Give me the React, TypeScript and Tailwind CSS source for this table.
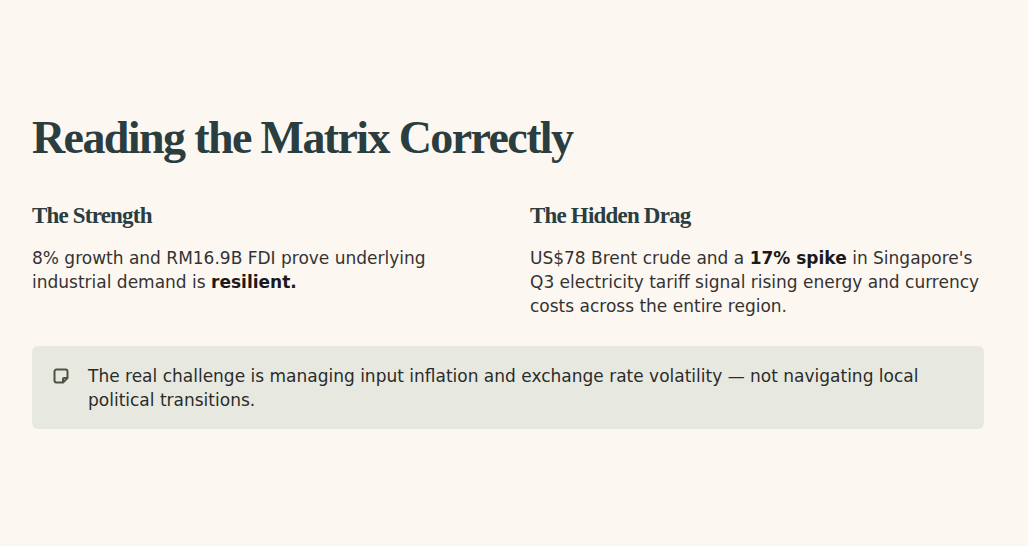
import React from "react";

const serif = { fontFamily: '"Liberation Serif", "DejaVu Serif", serif' };

function NoteIcon() {
  return (
    <svg width="16" height="16" viewBox="0 0 16 16" fill="none" className="shrink-0 mt-[4px]">
      <path
        d="M3.5 1.5h9a2 2 0 0 1 2 2v6.5l-4.5 4.5H3.5a2 2 0 0 1-2-2v-9a2 2 0 0 1 2-2z"
        stroke="#4b5443"
        strokeWidth="2"
        strokeLinejoin="round"
      />
      <path d="M14.5 10h-3.5a1 1 0 0 0-1 1v3.5" stroke="#4b5443" strokeWidth="2" strokeLinejoin="round" />
    </svg>
  );
}

export default function App() {
  return (
    <div
      className="min-h-screen w-full bg-[#fdf7f2] text-[#333333]"
      style={{ fontFamily: '"DejaVu Sans", "Noto Sans", sans-serif' }}
    >
      <div className="w-[952px] ml-[32px] pt-[108px]">
        <h1
          className="text-[46px] leading-[60px] font-bold text-[#2a3d3f] tracking-[-0.035em]"
          style={serif}
        >
          Reading the Matrix Correctly
        </h1>
        <div className="grid grid-cols-2 gap-x-[44px] mt-[33px]">
          <div>
            <h2 className="text-[23px] leading-[30px] font-bold text-[#2a3d3f] tracking-[-0.035em]" style={serif}>
              The Strength
            </h2>
            <p className="mt-[15px] text-[17px] leading-[24px] pr-[20px]">
              8% growth and RM16.9B FDI prove underlying industrial demand is{" "}
              <strong className="font-bold text-[#1a1a1a]">resilient.</strong>
            </p>
          </div>
          <div>
            <h2 className="text-[23px] leading-[30px] font-bold text-[#2a3d3f] tracking-[-0.035em]" style={serif}>
              The Hidden Drag
            </h2>
            <p className="mt-[15px] text-[17px] leading-[24px]">
              US$78 Brent crude and a <strong className="font-bold text-[#1a1a1a]">17% spike</strong> in
              Singapore's Q3 electricity tariff signal rising energy and currency costs across the entire region.
            </p>
          </div>
        </div>
        <div className="mt-[28px] flex gap-[19px] rounded-[6px] bg-[#e7e9e1] pl-[21px] pr-[40px] pt-[18px] pb-[17px]">
          <NoteIcon />
          <p className="text-[17px] leading-[24px] text-[#2b2b2b]">
            The real challenge is managing input inflation and exchange rate volatility — not navigating local
            political transitions.
          </p>
        </div>
      </div>
    </div>
  );
}
